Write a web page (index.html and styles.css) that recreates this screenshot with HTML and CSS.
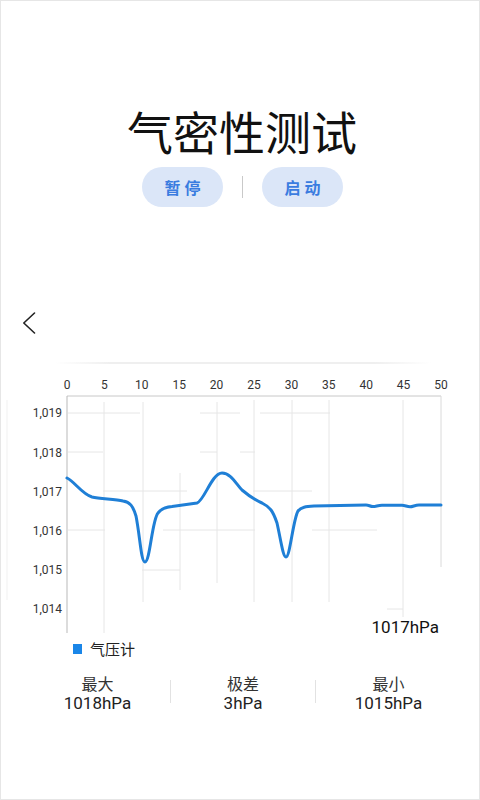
FILE: index.html
```html
<!DOCTYPE html>
<html lang="zh-CN">
<head>
<meta charset="utf-8">
<title>气密性测试</title>
<link rel="stylesheet" href="styles.css">
</head>
<body>
<div class="page">
  <h1 class="title">气密性测试</h1>
  <div class="actions">
    <button class="pill">暂停</button>
    <span class="sep"></span>
    <button class="pill">启动</button>
  </div>
  <div class="nav">
    <svg class="back" width="14" height="22" viewBox="0 0 14 22"><path d="M12.5 1 L1.8 11 L12.5 21" fill="none" stroke="#222" stroke-width="1.6" stroke-linecap="round" stroke-linejoin="round"/></svg>
  </div>
  <div class="rule"></div>
  <svg class="chart" width="478" height="272" viewBox="1 364 478 272">
    <g class="xlabels">
      <text x="67" y="389">0</text>
      <text x="104.4" y="389">5</text>
      <text x="141.8" y="389">10</text>
      <text x="179.2" y="389">15</text>
      <text x="216.6" y="389">20</text>
      <text x="254" y="389">25</text>
      <text x="291.4" y="389">30</text>
      <text x="328.8" y="389">35</text>
      <text x="366.2" y="389">40</text>
      <text x="403.6" y="389">45</text>
      <text x="441" y="389">50</text>
    </g>
    <g class="ylabels">
      <text x="62" y="417.3">1,019</text>
      <text x="62" y="456.5">1,018</text>
      <text x="62" y="495.7">1,017</text>
      <text x="62" y="534.9">1,016</text>
      <text x="62" y="574.1">1,015</text>
      <text x="62" y="613.3">1,014</text>
    </g>
    <g class="grid">
      <line x1="7" y1="400" x2="7" y2="600" class="faint"/>
      <line x1="104" y1="402" x2="104" y2="633"/>
      <line x1="143" y1="402" x2="143" y2="602"/>
      <line x1="180" y1="473" x2="180" y2="590"/>
      <line x1="217" y1="402" x2="217" y2="583"/>
      <line x1="254" y1="400" x2="254" y2="602"/>
      <line x1="292" y1="400" x2="292" y2="602"/>
      <line x1="329" y1="400" x2="329" y2="602"/>
      <line x1="403" y1="400" x2="403" y2="617"/>
      <line x1="68" y1="413" x2="140" y2="413"/>
      <line x1="200" y1="413" x2="240" y2="413"/>
      <line x1="260" y1="413" x2="330" y2="413"/>
      <line x1="68" y1="452" x2="103" y2="452"/>
      <line x1="200" y1="452" x2="217" y2="452"/>
      <line x1="240" y1="452" x2="255" y2="452"/>
      <line x1="103" y1="491" x2="187" y2="491"/>
      <line x1="253" y1="491" x2="312" y2="491"/>
      <line x1="68" y1="530" x2="105" y2="530"/>
      <line x1="163" y1="530" x2="255" y2="530"/>
      <line x1="312" y1="530" x2="377" y2="530"/>
      <line x1="142" y1="570" x2="180" y2="570"/>
      <line x1="387" y1="609" x2="403" y2="609"/>
    </g>
    <line x1="67" y1="396" x2="441" y2="396" class="frame-top"/>
    <line x1="67" y1="396" x2="67" y2="633" class="frame-left"/>
    <line x1="441" y1="396" x2="441" y2="567" class="frame-right"/>
    <path class="series" d="M67,478 C75,482 82,494 92,497 C100,499 115,499 123,501 C130,502 133,506 136,516 C140,536 141,562 145,562 C150,562 152,520 158,513 C162,508 166,507 172,506.5 L197,503 C204,501 212,473 222,473 C231,473 236,484 242,490 C249,496 255,500 262,503 C270,507 273,511 277,523 C281,541 283,557 286,557 C290,557 293,520 298,511 C301,507 306,506.5 314,506 L340,505.5 L366,505 C369,505 370,506.5 373,506.5 C376,506.5 378,505.3 382,505.3 L402,505.3 C405,505.3 407,506.8 410,506.8 C413,506.8 415,505 419,505 L441,505"/>
    <text class="current" x="439" y="633">1017hPa</text>
  </svg>
  <div class="legend"><span class="swatch"></span><span class="legend-text">气压计</span></div>
  <div class="stats">
    <div class="stat"><div class="stat-label">最大</div><div class="stat-value">1018hPa</div></div>
    <span class="vsep"></span>
    <div class="stat"><div class="stat-label">极差</div><div class="stat-value">3hPa</div></div>
    <span class="vsep"></span>
    <div class="stat"><div class="stat-label">最小</div><div class="stat-value">1015hPa</div></div>
  </div>
</div>
</body>
</html>
```

FILE: styles.css
```css
html, body {
  margin: 0;
  padding: 0;
  background: #ffffff;
}

.page {
  width: 480px;
  height: 800px;
  box-sizing: border-box;
  border: 1px solid #e6e6e6;
  overflow: hidden;
  font-family: Roboto, "Noto Sans CJK SC", sans-serif;
  color: #222;
}

.title {
  margin: 0;
  padding-top: 99px;
  height: 60px;
  line-height: 60px;
  text-align: center;
  font-family: "Noto Sans CJK SC", sans-serif;
  font-size: 46px;
  font-weight: 400;
  color: #111;
  padding-left: 4px;
}

.actions {
  margin-top: 7px;
  height: 40px;
  display: flex;
  justify-content: center;
  align-items: center;
  gap: 19px;
  padding-left: 5px;
}

.pill {
  width: 81px;
  height: 40px;
  border: none;
  border-radius: 20px;
  background: #dbe6f8;
  color: #3a7ce0;
  font-family: "Noto Sans CJK SC", sans-serif;
  font-weight: 700;
  font-size: 16px;
  letter-spacing: 4px;
  padding: 0 0 0 4px;
  margin: 0;
}

.sep {
  width: 1px;
  height: 22px;
  background: #c9c9c9;
}

.nav {
  margin-top: 105px;
  height: 22px;
  padding-left: 21px;
}

.back {
  display: block;
}

.rule {
  margin: 28px 48px 0 54px;
  height: 2px;
  background: linear-gradient(90deg, rgba(236,236,236,0) 0%, #efefef 15%, #efefef 85%, rgba(236,236,236,0) 100%);
}

.chart {
  display: block;
}

.xlabels text {
  font-family: Roboto, sans-serif;
  font-size: 12px;
  fill: #333;
  text-anchor: middle;
}

.ylabels text {
  font-family: Roboto, sans-serif;
  font-size: 12px;
  fill: #333;
  text-anchor: end;
}

.grid line {
  stroke: #e6e6e6;
  stroke-width: 1;
}

.grid .faint {
  stroke: #f1f1f1;
}

.frame-top {
  stroke: #c8c8c8;
  stroke-width: 1;
}

.frame-left {
  stroke: #b9b9b9;
  stroke-width: 1;
}

.frame-right {
  stroke: #dadada;
  stroke-width: 1;
}

.series {
  fill: none;
  stroke: #1f7fd6;
  stroke-width: 3;
  stroke-linecap: round;
  stroke-linejoin: round;
}

.current {
  font-family: Roboto, sans-serif;
  font-size: 17px;
  fill: #111;
  text-anchor: end;
}

.legend {
  height: 26px;
  display: flex;
  align-items: center;
  padding-left: 72px;
  gap: 8px;
}

.swatch {
  width: 9px;
  height: 10px;
  background: #1a86e8;
}

.legend-text {
  font-family: "Noto Sans CJK SC", sans-serif;
  font-size: 15px;
  line-height: 20px;
  color: #222;
}

.stats {
  padding-top: 11px;
  padding-left: 24px;
  display: grid;
  grid-template-columns: 145px 1px 144px 1px 145px;
}

.stat {
  text-align: center;
}

.stat-label {
  font-family: "Noto Sans CJK SC", sans-serif;
  font-size: 16px;
  line-height: 20px;
  color: #333;
}

.stat-value {
  font-family: Roboto, sans-serif;
  font-size: 17px;
  line-height: 20px;
  color: #222;
}

.vsep {
  margin-top: 7px;
  height: 23px;
  background: #e2e2e2;
}
```
